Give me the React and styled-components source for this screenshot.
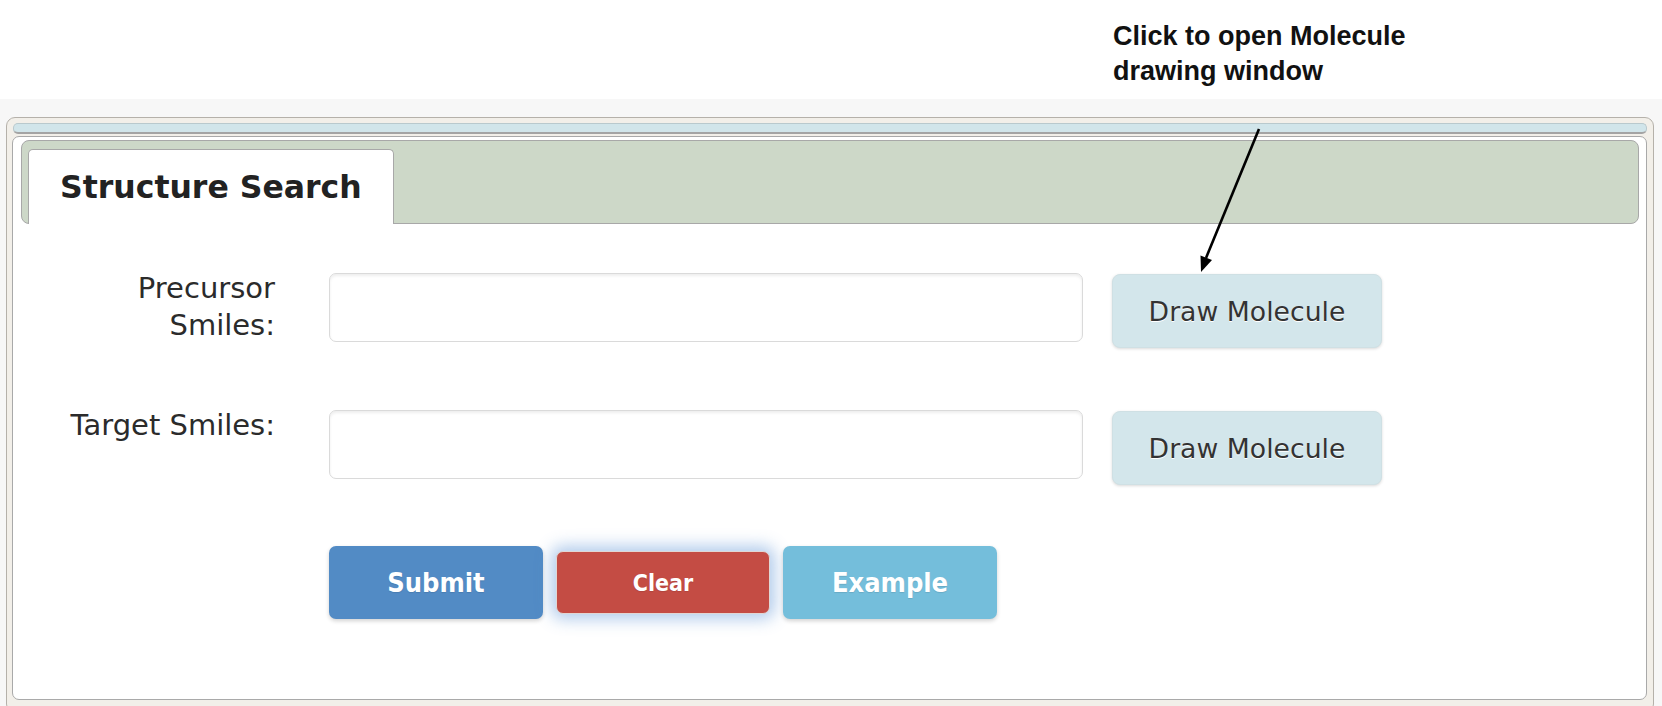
import * as React from "react";
import styled, { createGlobalStyle } from "styled-components";

const GlobalStyle = createGlobalStyle`
  html, body {
    margin: 0;
    padding: 0;
    background: #fff;
  }
  body {
    font-family: "DejaVu Sans", Verdana, sans-serif;
  }
`;

const Page = styled.div`
  position: relative;
  width: 1662px;
  height: 706px;
  overflow: hidden;
`;

const Header = styled.div`
  height: 99px;
  box-sizing: border-box;
  padding: 19px 0 0 1113px;
  background: #fff;
`;

const Note = styled.div`
  font-family: "Liberation Sans", Arial, sans-serif;
  font-weight: bold;
  font-size: 27px;
  line-height: 35px;
  color: #111;
  width: 340px;
`;

const Band = styled.div`
  background: #f7f7f7;
  padding: 18px 8px 0 6px;
`;

const Frame = styled.div`
  background: #f2efe9;
  border: 1px solid #b5b1aa;
  border-radius: 9px;
  padding: 5px 6px 12px 5px;
`;

const TopStrip = styled.div`
  height: 8px;
  margin-left: 1px;
  background: #d1e5ea;
  border: 1px solid #b9c9cd;
  border-bottom: 2px solid #a4a4a4;
  border-radius: 5px;
`;

const Panel = styled.div`
  margin-top: 2px;
  background: #fff;
  border: 1px solid #a9a9a9;
  border-radius: 7px;
  height: 559px;
  padding: 3px 7px 0 8px;
`;

const TabBar = styled.div`
  display: flex;
  align-items: flex-end;
  background: #cdd8c8;
  border: 1px solid #a8a8a8;
  border-radius: 8px;
  padding: 8px 0 0 6px;
`;

const Tab = styled.div`
  display: flex;
  align-items: center;
  height: 75px;
  box-sizing: border-box;
  margin-bottom: -1px;
  padding: 0 31px 0 31px;
  background: #fff;
  border: 1px solid #a8a8a8;
  border-bottom: none;
  border-radius: 5px 5px 0 0;
  font-family: "DejaVu Sans", Verdana, sans-serif;
  font-weight: bold;
  font-size: 31.5px;
  color: #222;
`;

const Form = styled.div`
  display: flex;
  flex-direction: column;
  gap: 62px;
  margin: 49px 0 0 -8px;
  padding-left: 32px;
`;

const Row = styled.div`
  display: flex;
  align-items: flex-start;
`;

const Label = styled.label`
  width: 230px;
  margin-top: -3px;
  margin-right: 54px;
  text-align: right;
  font-size: 29px;
  line-height: 37px;
  color: #2b2b2b;
`;

const Spacer = styled.div`
  width: 230px;
  margin-right: 54px;
`;

const Field = styled.input`
  width: 754px;
  height: 69px;
  box-sizing: border-box;
  margin: 0 29px 0 0;
  border: 1px solid #dadada;
  border-radius: 7px;
  background: #fff;
  box-shadow: inset 0 2px 3px rgba(0, 0, 0, 0.07);
  outline: none;
`;

const DrawButton = styled.button`
  width: 270px;
  height: 74px;
  margin-top: 1px;
  border: 1px solid #cfe0e4;
  border-radius: 8px;
  background: #d3e6eb;
  box-shadow: 0 1px 3px rgba(0, 0, 0, 0.15);
  font-family: "DejaVu Sans", Verdana, sans-serif;
  font-size: 26.7px;
  color: #333;
  text-shadow: 0 1px 0 #fff;
  cursor: pointer;
`;

const Actions = styled.div`
  display: flex;
  align-items: center;
  gap: 13px;
  margin-top: -1px;
`;

const ActionButton = styled.button`
  width: 214px;
  height: ${(p) => (p.$small ? "63px" : "73px")};
  box-sizing: border-box;
  border: ${(p) => (p.$small ? "1px solid #e0d6d4" : "none")};
  border-radius: 7px;
  background: ${(p) => p.$bg};
  box-shadow: ${(p) =>
    p.$small
      ? "0 0 16px 5px rgba(82, 139, 210, 0.45)"
      : "0 2px 4px rgba(0, 0, 0, 0.18)"};
  font-family: "DejaVu Sans Condensed", "DejaVu Sans", sans-serif;
  font-stretch: condensed;
  font-weight: bold;
  font-size: ${(p) => (p.$small ? "23px" : "27px")};
  color: #fff;
  text-shadow: 0 1px 1px rgba(0, 0, 0, 0.1);
  cursor: pointer;
`;

const Pointer = styled.svg`
  position: absolute;
  left: 0;
  top: 0;
  pointer-events: none;
`;

const Arrow = () => (
  <Pointer width="1662" height="706" viewBox="0 0 1662 706">
    <line x1="1259" y1="129" x2="1206" y2="258" stroke="#000" strokeWidth="2.6" />
    <polygon points="1201,272 1212,260 1200.5,255.5" fill="#000" />
  </Pointer>
);

const App = () => {
  return (
    <Page>
      <GlobalStyle />
      <Header>
        <Note>
          Click to open Molecule
          <br />
          drawing window
        </Note>
      </Header>
      <Band>
        <Frame>
          <TopStrip />
          <Panel>
            <TabBar>
              <Tab>Structure Search</Tab>
            </TabBar>
            <Form>
              <Row>
                <Label>Precursor Smiles:</Label>
                <Field type="text" />
                <DrawButton>Draw Molecule</DrawButton>
              </Row>
              <Row>
                <Label>Target Smiles:</Label>
                <Field type="text" />
                <DrawButton>Draw Molecule</DrawButton>
              </Row>
              <Row>
                <Spacer />
                <Actions>
                  <ActionButton $bg="#528bc5">Submit</ActionButton>
                  <ActionButton $bg="#c44c44" $small>
                    Clear
                  </ActionButton>
                  <ActionButton $bg="#74bedb">Example</ActionButton>
                </Actions>
              </Row>
            </Form>
          </Panel>
        </Frame>
      </Band>
      <Arrow />
    </Page>
  );
};

export default App;
